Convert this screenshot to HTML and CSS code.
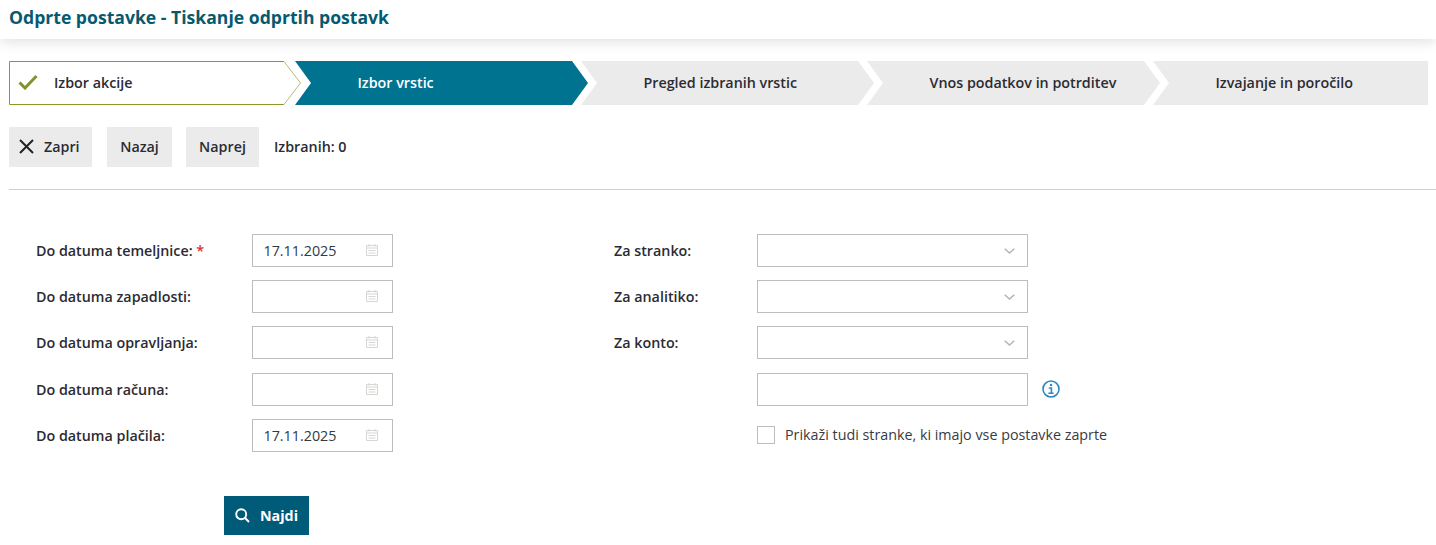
FILE: index.html
```html
<!DOCTYPE html>
<html lang="en">
<head>
    <meta charset="UTF-8">
    <meta name="viewport" content="width=device-width, initial-scale=1.0">
    <title>Odprte postavke - Tiskanje odprtih postavk</title>
    <link rel="stylesheet" href="styles.css">
</head>
<body>
    <svg width="0" height="0" class="icon-defs">
        <symbol id="cal" viewBox="0 0 12 12">
            <path d="M.5 1.5h11v10H.5zM.5 4h11M3 0v2.5M9 0v2.5M2.5 6.5h7M2.5 9h7" fill="none" stroke="currentColor"/>
        </symbol>
        <symbol id="chev" viewBox="0 0 11 6">
            <path d="M.7.7 5.5 5l4.8-4.3" fill="none" stroke="currentColor" stroke-width="1.5"/>
        </symbol>
    </svg>
    <header class="page-header">
        <h1>Odprte postavke - Tiskanje odprtih postavk</h1>
    </header>
    <div class="steps">
        <div class="step step-done">
            <svg class="step-outline" width="292" height="44" viewBox="0 0 292 44">
                <path d="M275 .5H.5v43H275" fill="none" stroke="#8a9a26"/>
                <path d="M275 .5 291.5 22 275 43.5" fill="none" stroke="#b3bd72"/>
            </svg>
            <svg class="step-check" width="20" height="16" viewBox="0 0 20 16">
                <path d="M1.5 8.5 7 14 18.5 2" fill="none" stroke="#7f9431" stroke-width="3"/>
            </svg>
            <span>Izbor akcije</span>
        </div>
        <div class="step step-active"><span>Izbor vrstic</span></div>
        <div class="step"><span>Pregled izbranih vrstic</span></div>
        <div class="step"><span>Vnos podatkov in potrditev</span></div>
        <div class="step step-last"><span>Izvajanje in poročilo</span></div>
    </div>
    <div class="toolbar">
        <button class="btn btn-close" type="button">
            <svg width="15" height="15" viewBox="0 0 15 15">
                <path d="M1 1l13 13M14 1 1 14" fill="none" stroke="#222" stroke-width="2"/>
            </svg>
            Zapri
        </button>
        <button class="btn btn-back" type="button">Nazaj</button>
        <button class="btn btn-next" type="button">Naprej</button>
        <span class="selected-count">Izbranih: 0</span>
    </div>
    <form class="filter-form">
        <div class="form-col form-col-left">
            <div class="form-row">
                <label>Do datuma temeljnice: <span class="required">*</span></label>
                <div class="input-box">17.11.2025<svg class="cal-icon"><use href="#cal"/></svg></div>
            </div>
            <div class="form-row">
                <label>Do datuma zapadlosti:</label>
                <div class="input-box"><svg class="cal-icon"><use href="#cal"/></svg></div>
            </div>
            <div class="form-row">
                <label>Do datuma opravljanja:</label>
                <div class="input-box"><svg class="cal-icon"><use href="#cal"/></svg></div>
            </div>
            <div class="form-row">
                <label>Do datuma računa:</label>
                <div class="input-box"><svg class="cal-icon"><use href="#cal"/></svg></div>
            </div>
            <div class="form-row">
                <label>Do datuma plačila:</label>
                <div class="input-box">17.11.2025<svg class="cal-icon"><use href="#cal"/></svg></div>
            </div>
        </div>
        <div class="form-col form-col-right">
            <div class="form-row">
                <label>Za stranko:</label>
                <div class="input-box"><svg class="chev-icon"><use href="#chev"/></svg></div>
            </div>
            <div class="form-row">
                <label>Za analitiko:</label>
                <div class="input-box"><svg class="chev-icon"><use href="#chev"/></svg></div>
            </div>
            <div class="form-row">
                <label>Za konto:</label>
                <div class="input-box"><svg class="chev-icon"><use href="#chev"/></svg></div>
            </div>
            <div class="form-row">
                <label></label>
                <div class="input-box"></div>
                <svg class="info-icon" width="18" height="18" viewBox="0 0 18 18">
                    <circle cx="9" cy="9" r="8" fill="none" stroke="#2b86c5" stroke-width="1.6"/>
                    <path d="M6.8 8h2.6v5M6.4 13.2h5.2" fill="none" stroke="#2b86c5" stroke-width="1.6"/>
                    <circle cx="9" cy="5" r="1.2" fill="#2b86c5"/>
                </svg>
            </div>
            <div class="form-row">
                <label></label>
                <span class="checkbox"></span>
                <span class="checkbox-label">Prikaži tudi stranke, ki imajo vse postavke zaprte</span>
            </div>
        </div>
    </form>
    <div class="form-actions">
        <button class="btn-search" type="button">
            <svg width="15" height="15" viewBox="0 0 15 15">
                <circle cx="6.2" cy="6.2" r="5" fill="none" stroke="#fff" stroke-width="1.9"/>
                <path d="M9.8 9.8 14 14" fill="none" stroke="#fff" stroke-width="2"/>
            </svg>
            Najdi
        </button>
    </div>
</body>
</html>
```

FILE: styles.css
```css
body {
    font-family: "Open Sans", Arial, sans-serif;
    font-size: 14.3px;
    color: #2b2b33;
    background-color: white;
    margin: 0;
    height: 545px;
    overflow: hidden;
}
.icon-defs {
    display: block;
    height: 0;
}
.page-header {
    height: 39px;
    background-color: white;
    box-shadow: 0 3px 12px rgba(0, 0, 0, 0.12);
}
h1 {
    margin: 0;
    padding: 6px 0 0 9px;
    font-size: 17.6px;
    line-height: 22px;
    font-weight: 700;
    color: #065a70;
}
.steps {
    display: flex;
    margin-top: 22px;
    padding-left: 9px;
}
.step {
    position: relative;
    flex: none;
    width: 293px;
    height: 44px;
    margin-left: -7px;
    padding: 0 0 2px 62.5px;
    box-sizing: border-box;
    display: flex;
    align-items: center;
    font-weight: 600;
    background-color: #ebebeb;
    clip-path: polygon(0 0, calc(100% - 16px) 0, 100% 50%, calc(100% - 16px) 100%, 0 100%, 16px 50%);
}
.step-done {
    width: 292px;
    margin-left: 0;
    padding-left: 45px;
    background: none;
    clip-path: none;
}
.step-outline {
    position: absolute;
    left: 0;
    top: 0;
}
.step-check {
    position: absolute;
    left: 9px;
    top: 13px;
}
.step-active {
    margin-left: -6px;
    background-color: #007391;
    color: white;
}
.step-last {
    width: 275px;
    clip-path: polygon(0 0, 100% 0, 100% 100%, 0 100%, 16px 50%);
}
.toolbar {
    display: flex;
    align-items: center;
    margin: 22px 0 0 9px;
    padding-bottom: 22px;
    border-bottom: 1px solid #d0d0d0;
}
.btn {
    height: 40px;
    border: none;
    background-color: #ebebeb;
    color: #2b2b33;
    font-family: inherit;
    font-size: 14.3px;
    font-weight: 600;
    padding: 0 0 2px;
    display: flex;
    align-items: center;
    justify-content: center;
}
.btn-close {
    width: 83px;
    gap: 10px;
    justify-content: flex-start;
    padding-left: 10px;
}
.btn-back {
    width: 65px;
    margin-left: 15px;
}
.btn-next {
    width: 73px;
    margin-left: 14px;
}
.selected-count {
    margin: 0 0 2px 15px;
    font-weight: 600;
}
.filter-form {
    display: flex;
    margin: 44px 0 0 36px;
}
.form-col {
    display: flex;
    flex-direction: column;
    gap: 13.2px;
}
.form-col-left {
    width: 578px;
}
.form-row {
    display: flex;
    align-items: center;
    height: 33px;
}
.form-row label {
    font-weight: 600;
    flex: none;
}
.form-col-left label {
    width: 216px;
}
.form-col-right label {
    width: 143px;
}
.required {
    color: #d9303a;
}
.input-box {
    position: relative;
    height: 33px;
    box-sizing: border-box;
    border: 1px solid #bdbdbd;
    padding-left: 10.5px;
    line-height: 32px;
    color: #2f3a45;
}
.form-col-left .input-box {
    width: 141px;
}
.form-col-right .input-box {
    width: 271px;
}
.cal-icon {
    position: absolute;
    right: 14px;
    top: 9px;
    width: 12px;
    height: 12px;
    color: #d6d6d2;
}
.chev-icon {
    position: absolute;
    right: 12px;
    top: 13px;
    width: 11px;
    height: 6px;
    color: #b4b4b4;
}
.info-icon {
    margin-left: 14px;
}
.checkbox {
    width: 18px;
    height: 18px;
    box-sizing: border-box;
    border: 1px solid #bdbdbd;
}
.checkbox-label {
    margin: 0 0 2px 10px;
    color: #3a3a42;
}
.form-actions {
    margin: 44px 0 0 224px;
}
.btn-search {
    width: 85px;
    height: 39px;
    border: none;
    padding: 0;
    background-color: #005b78;
    color: white;
    font-family: inherit;
    font-size: 14.3px;
    font-weight: 700;
    display: flex;
    align-items: center;
    justify-content: center;
    gap: 10px;
}
```
